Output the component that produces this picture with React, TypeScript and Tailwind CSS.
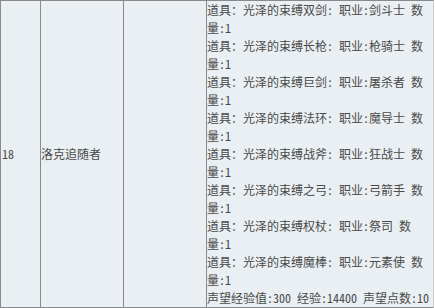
const items = [
  { name: '光泽的束缚双剑', job: '剑斗士' },
  { name: '光泽的束缚长枪', job: '枪骑士' },
  { name: '光泽的束缚巨剑', job: '屠杀者' },
  { name: '光泽的束缚法环', job: '魔导士' },
  { name: '光泽的束缚战斧', job: '狂战士' },
  { name: '光泽的束缚之弓', job: '弓箭手' },
  { name: '光泽的束缚权杖', job: '祭司' },
  { name: '光泽的束缚魔棒', job: '元素使' },
];

export default function App() {
  return (
    <div
      className="w-[434px] bg-[#e9eff2] text-[12px] leading-[18px] text-[#4a4a4a]"
      style={{ fontFamily: '"Noto Sans Mono CJK SC", "Noto Sans CJK SC", monospace' }}
    >
      <div className="flex border border-[#8a8a8a] border-r-[#c8cdd0]">
        <div className="w-[40px] shrink-0 border-r border-[#8a8a8a] pl-px flex items-center">18</div>
        <div className="w-[83px] shrink-0 border-r border-[#8a8a8a] flex items-center">洛克追随者</div>
        <div className="w-[83px] shrink-0 border-r border-[#8a8a8a]"></div>
        <div className="flex-1 min-w-0">
          {items.map(item => (
            <div key={item.name}>
              道具：{item.name}: 职业:{item.job} 数量:1
            </div>
          ))}
          <div className="whitespace-nowrap">声望经验值:300 经验:14400 声望点数:10</div>
        </div>
      </div>
    </div>
  );
}
